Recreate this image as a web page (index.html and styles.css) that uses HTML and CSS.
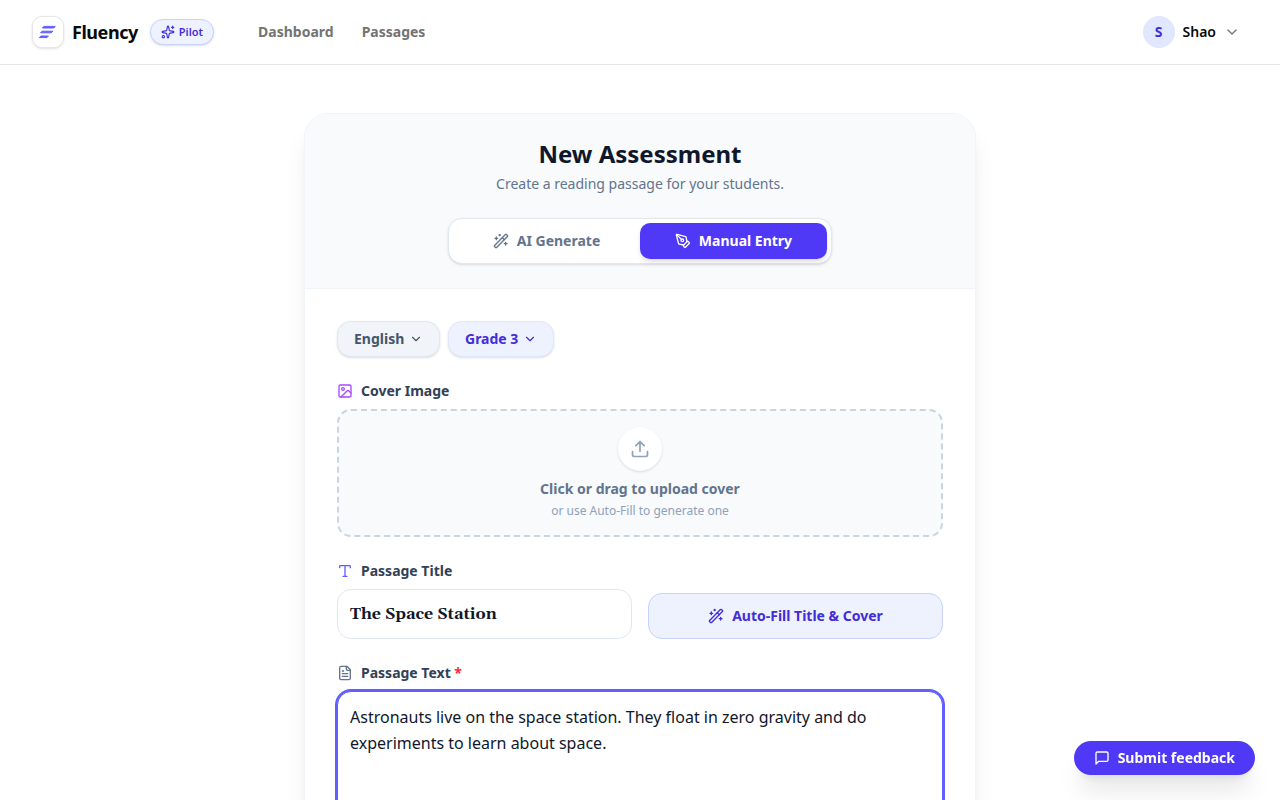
FILE: index.html
```html
<!DOCTYPE html>
<html lang="en">
<head>
  <meta charset="UTF-8" />
  <meta name="viewport" content="width=device-width, initial-scale=1" />
  <title>Fluency - New Assessment</title>
  <link rel="stylesheet" href="styles.css">
</head>
<body>
  <header class="topbar">
    <a class="brand" href="#">
      <span class="brand-mark">
        <svg width="20" height="20" viewBox="0 0 20 20" fill="#615fff" stroke="#615fff" stroke-width="1" stroke-linejoin="round">
          <path d="M5.8 4.4H17.2L15.8 6H4.4z" />
          <path d="M4 9.2H14.8L13.4 10.8H2.6z" />
          <path d="M2.8 14H10.4L9 15.6H1.4z" />
        </svg>
      </span>
      <span class="brand-name">Fluency</span>
    </a>
    <span class="badge">
      <svg class="icon icon-sm" viewBox="0 0 24 24">
        <path d="M11.017 2.814a1 1 0 0 1 1.966 0l1.051 5.558a2 2 0 0 0 1.594 1.594l5.558 1.051a1 1 0 0 1 0 1.966l-5.558 1.051a2 2 0 0 0-1.594 1.594l-1.051 5.558a1 1 0 0 1-1.966 0l-1.051-5.558a2 2 0 0 0-1.594-1.594l-5.558-1.051a1 1 0 0 1 0-1.966l5.558-1.051a2 2 0 0 0 1.594-1.594z" />
        <path d="M20 2v4M22 4h-4" />
        <circle cx="4" cy="20" r="2" />
      </svg>
      Pilot
    </span>
    <nav class="nav">
      <a href="#">Dashboard</a>
      <a href="#">Passages</a>
    </nav>
    <button class="user-menu" type="button" aria-haspopup="menu">
      <span class="avatar">S</span>
      Shao
      <svg class="icon chevron-muted" viewBox="0 0 24 24"><path d="m6 9 6 6 6-6" /></svg>
    </button>
  </header>

  <main class="page">
    <form class="card">
      <div class="card-header">
        <h1>New Assessment</h1>
        <p>Create a reading passage for your students.</p>
        <div class="mode-switch">
          <button class="mode" type="button">
            <svg class="icon" viewBox="0 0 24 24">
              <path d="m21.64 3.64-1.28-1.28a1.21 1.21 0 0 0-1.72 0L2.36 18.64a1.21 1.21 0 0 0 0 1.72l1.28 1.28a1.2 1.2 0 0 0 1.72 0L21.64 5.36a1.2 1.2 0 0 0 0-1.72" />
              <path d="m14 7 3 3M5 6v4M19 14v4M10 2v2M7 8H3M21 16h-4M11 3H9" />
            </svg>
            AI Generate
          </button>
          <button class="mode active" type="button" aria-pressed="true">
            <svg class="icon" viewBox="0 0 24 24">
              <path d="M15.707 21.293a1 1 0 0 1-1.414 0l-1.586-1.586a1 1 0 0 1 0-1.414l5.586-5.586a1 1 0 0 1 1.414 0l1.586 1.586a1 1 0 0 1 0 1.414z" />
              <path d="m18 13-1.375-6.874a1 1 0 0 0-.746-.776L3.235 2.028a1 1 0 0 0-1.207 1.207L5.35 15.879a1 1 0 0 0 .776.746L13 18" />
              <path d="m2.3 2.3 7.286 7.286" />
              <circle cx="11" cy="11" r="2" />
            </svg>
            Manual Entry
          </button>
        </div>
      </div>

      <div class="card-body">
        <div class="filters">
          <div class="pill">
            <select aria-label="Language">
              <option>English</option>
            </select>
            <svg class="icon icon-sm" viewBox="0 0 24 24"><path d="m6 9 6 6 6-6" /></svg>
          </div>
          <div class="pill pill-indigo">
            <select aria-label="Grade">
              <option>Grade 3</option>
            </select>
            <svg class="icon icon-sm" viewBox="0 0 24 24"><path d="m6 9 6 6 6-6" /></svg>
          </div>
        </div>

        <div class="field">
          <div class="label" id="cover-label">
            <svg class="icon purple" viewBox="0 0 24 24">
              <rect width="18" height="18" x="3" y="3" rx="2" />
              <circle cx="9" cy="9" r="2" />
              <path d="m21 15-3.086-3.086a2 2 0 0 0-2.828 0L6 21" />
            </svg>
            Cover Image
          </div>
          <button class="dropzone" type="button" aria-describedby="cover-label">
            <span class="drop-icon">
              <svg class="icon icon-lg" viewBox="0 0 24 24">
                <path d="M12 3v12M17 8l-5-5-5 5M21 15v4a2 2 0 0 1-2 2H5a2 2 0 0 1-2-2v-4" />
              </svg>
            </span>
            <span class="drop-title">Click or drag to upload cover</span>
            <span class="drop-hint">or use Auto-Fill to generate one</span>
          </button>
        </div>

        <div class="title-row">
          <div class="field">
            <label class="label" for="title">
              <svg class="icon indigo" viewBox="0 0 24 24">
                <path d="M12 4v16M4 7V5a1 1 0 0 1 1-1h14a1 1 0 0 1 1 1v2M9 20h6" />
              </svg>
              Passage Title
            </label>
            <input class="title-input" id="title" type="text" value="The Space Station" />
          </div>
          <button class="autofill" type="button">
            <svg class="icon" viewBox="0 0 24 24">
              <path d="m21.64 3.64-1.28-1.28a1.21 1.21 0 0 0-1.72 0L2.36 18.64a1.21 1.21 0 0 0 0 1.72l1.28 1.28a1.2 1.2 0 0 0 1.72 0L21.64 5.36a1.2 1.2 0 0 0 0-1.72" />
              <path d="m14 7 3 3M5 6v4M19 14v4M10 2v2M7 8H3M21 16h-4M11 3H9" />
            </svg>
            Auto-Fill Title &amp; Cover
          </button>
        </div>

        <div class="field">
          <label class="label" for="passage">
            <svg class="icon slate" viewBox="0 0 24 24">
              <path d="M15 2H6a2 2 0 0 0-2 2v16a2 2 0 0 0 2 2h12a2 2 0 0 0 2-2V7Z" />
              <path d="M14 2v4a2 2 0 0 0 2 2h4M10 9H8M16 13H8M16 17H8" />
            </svg>
            <span>Passage Text <span class="required">*</span></span>
          </label>
          <textarea class="passage" id="passage" rows="8" spellcheck="false">Astronauts live on the space station. They float in zero gravity and do experiments to learn about space.</textarea>
        </div>
      </div>
    </form>
  </main>

  <button class="feedback" type="button">
    <svg class="icon" viewBox="0 0 24 24">
      <path d="M21 15a2 2 0 0 1-2 2H7l-4 4V5a2 2 0 0 1 2-2h14a2 2 0 0 1 2 2z" />
    </svg>
    Submit feedback
  </button>
</body>
</html>
```
FILE: styles.css
```css
* {
  box-sizing: border-box;
}

body {
  margin: 0;
  background: #fff;
  color: #0a0a0a;
  font-family: "Noto Sans", sans-serif;
  font-size: 14px;
  line-height: 20px;
}

button,
input,
select,
textarea {
  font: inherit;
  color: inherit;
  margin: 0;
}

button {
  cursor: pointer;
}

a {
  color: inherit;
  text-decoration: none;
}

/* Icons */
.icon {
  width: 16px;
  height: 16px;
  flex-shrink: 0;
  fill: none;
  stroke: currentColor;
  stroke-width: 2;
  stroke-linecap: round;
  stroke-linejoin: round;
}

.icon-sm { width: 14px; height: 14px; }
.icon-lg { width: 20px; height: 20px; }
.purple { color: #ad46ff; }
.indigo { color: #615fff; }
.slate { color: #62748e; }

/* Top bar */
.topbar {
  display: flex;
  align-items: center;
  height: 65px;
  padding: 0 32px;
  border-bottom: 1px solid #e5e5e5;
}

.brand {
  display: flex;
  align-items: center;
  gap: 8px;
}

.brand-mark {
  display: flex;
  align-items: center;
  justify-content: center;
  width: 32px;
  height: 32px;
  border: 1px solid #e5e5e5;
  border-radius: 10px;
  box-shadow: 0 1px 3px rgba(0, 0, 0, 0.1), 0 1px 2px -1px rgba(0, 0, 0, 0.1);
}

.brand-name {
  font-size: 18px;
  font-weight: 700;
  line-height: 28px;
  letter-spacing: -0.025em;
}

.badge {
  display: flex;
  align-items: center;
  gap: 4px;
  margin-left: 12px;
  padding: 4px 10px;
  border: 1px solid #c6d2ff;
  border-radius: 999px;
  background: #eef2ff;
  color: #432dd7;
  font-size: 11px;
  font-weight: 600;
  line-height: 16px;
  box-shadow: 0 1px 3px rgba(0, 0, 0, 0.1), 0 1px 2px -1px rgba(0, 0, 0, 0.1);
}

.nav {
  display: flex;
  gap: 28px;
  margin-left: 44px;
  color: #737373;
  font-weight: 700;
}

.user-menu {
  display: flex;
  align-items: center;
  gap: 8px;
  margin-left: auto;
  padding: 0 8px;
  border: 0;
  background: none;
  font-weight: 600;
}

.avatar {
  display: flex;
  align-items: center;
  justify-content: center;
  width: 32px;
  height: 32px;
  border-radius: 50%;
  background: #e0e7ff;
  color: #432dd7;
  font-weight: 700;
}

.chevron-muted {
  color: #737373;
}

/* Card */
.page {
  padding: 48px 16px;
}

.card {
  max-width: 672px;
  margin: 0 auto;
  border: 1px solid #f1f5f9;
  border-radius: 24px;
  background: #fff;
  overflow: hidden;
  box-shadow: 0 20px 25px -5px rgba(0, 0, 0, 0.1), 0 8px 10px -6px rgba(0, 0, 0, 0.1);
}

.card-header {
  display: flex;
  flex-direction: column;
  align-items: center;
  padding: 24px;
  border-bottom: 1px solid #f1f5f9;
  background: #f8fafc;
  text-align: center;
}

.card-header h1 {
  margin: 0;
  color: #0f172b;
  font-size: 24px;
  font-weight: 700;
  line-height: 32px;
}

.card-header p {
  margin: 4px 0 24px;
  color: #62748e;
}

.mode-switch {
  display: flex;
  width: 100%;
  max-width: 384px;
  padding: 4px;
  border: 1px solid #e2e8f0;
  border-radius: 14px;
  background: #fff;
  box-shadow: 0 1px 3px rgba(0, 0, 0, 0.1), 0 1px 2px -1px rgba(0, 0, 0, 0.1);
}

.mode {
  display: flex;
  flex: 1;
  align-items: center;
  justify-content: center;
  gap: 8px;
  padding: 8px;
  border: 0;
  border-radius: 10px;
  background: none;
  color: #62748e;
  font-weight: 700;
}

.mode.active {
  background: #4f39f6;
  color: #fff;
  box-shadow: 0 4px 6px -1px rgba(0, 0, 0, 0.1), 0 2px 4px -2px rgba(0, 0, 0, 0.1);
}

.card-body {
  display: flex;
  flex-direction: column;
  gap: 24px;
  padding: 32px;
}

/* Language and grade */
.filters {
  display: flex;
  gap: 8px;
}

.pill {
  display: flex;
  align-items: center;
  gap: 4px;
  height: 36px;
  padding: 0 16px;
  border: 1px solid #e2e8f0;
  border-radius: 14px;
  background: #f1f5f9;
  color: #45556c;
  font-weight: 700;
  box-shadow: 0 1px 3px rgba(0, 0, 0, 0.1), 0 1px 2px -1px rgba(0, 0, 0, 0.1);
}

.pill-indigo {
  border-color: #e0e7ff;
  background: #eef2ff;
  color: #432dd7;
}

.pill select {
  appearance: none;
  padding: 0;
  border: 0;
  background: none;
  cursor: pointer;
}

/* Fields */
.field {
  display: flex;
  flex-direction: column;
  gap: 8px;
}

.label {
  display: flex;
  align-items: center;
  gap: 8px;
  color: #314158;
  font-weight: 700;
}

.required {
  color: #fb2c36;
}

.dropzone {
  display: flex;
  flex-direction: column;
  align-items: center;
  padding: 16px;
  border: 2px dashed #cad5e2;
  border-radius: 14px;
  background: #f8fafc;
}

.drop-icon {
  display: flex;
  padding: 12px;
  margin-bottom: 8px;
  border-radius: 50%;
  background: #fff;
  color: #90a1b9;
  box-shadow: 0 1px 3px rgba(0, 0, 0, 0.1), 0 1px 2px -1px rgba(0, 0, 0, 0.1);
}

.drop-title {
  color: #62748e;
  font-weight: 700;
}

.drop-hint {
  margin-top: 4px;
  color: #90a1b9;
  font-size: 12px;
  line-height: 16px;
}

.title-row {
  display: grid;
  grid-template-columns: 1fr 1fr;
  gap: 16px;
  align-items: end;
}

.title-input {
  width: 100%;
  height: 50px;
  padding: 0 12px;
  border: 1px solid #e2e8f0;
  border-radius: 14px;
  color: #0f172b;
  font-family: Georgia, Gelasio, serif;
  font-size: 16px;
  font-weight: 700;
}

.autofill {
  display: flex;
  align-items: center;
  justify-content: center;
  gap: 8px;
  padding: 12px 16px;
  border: 1px solid #c6d2ff;
  border-radius: 14px;
  background: #eef2ff;
  color: #432dd7;
  font-weight: 700;
}

.passage {
  width: 100%;
  padding: 12px;
  border: 1px solid #615fff;
  border-radius: 14px;
  outline: none;
  color: #0f172b;
  font-size: 16px;
  line-height: 26px;
  resize: none;
  box-shadow: 0 0 0 2px #615fff;
}

/* Floating feedback button */
.feedback {
  position: fixed;
  right: 25px;
  bottom: 25px;
  display: flex;
  align-items: center;
  gap: 8px;
  height: 34px;
  padding: 0 20px;
  border: 0;
  border-radius: 999px;
  background: #4f39f6;
  color: #fff;
  font-weight: 700;
  box-shadow: 0 20px 25px -5px rgba(0, 0, 0, 0.1), 0 8px 10px -6px rgba(0, 0, 0, 0.1);
}
```
